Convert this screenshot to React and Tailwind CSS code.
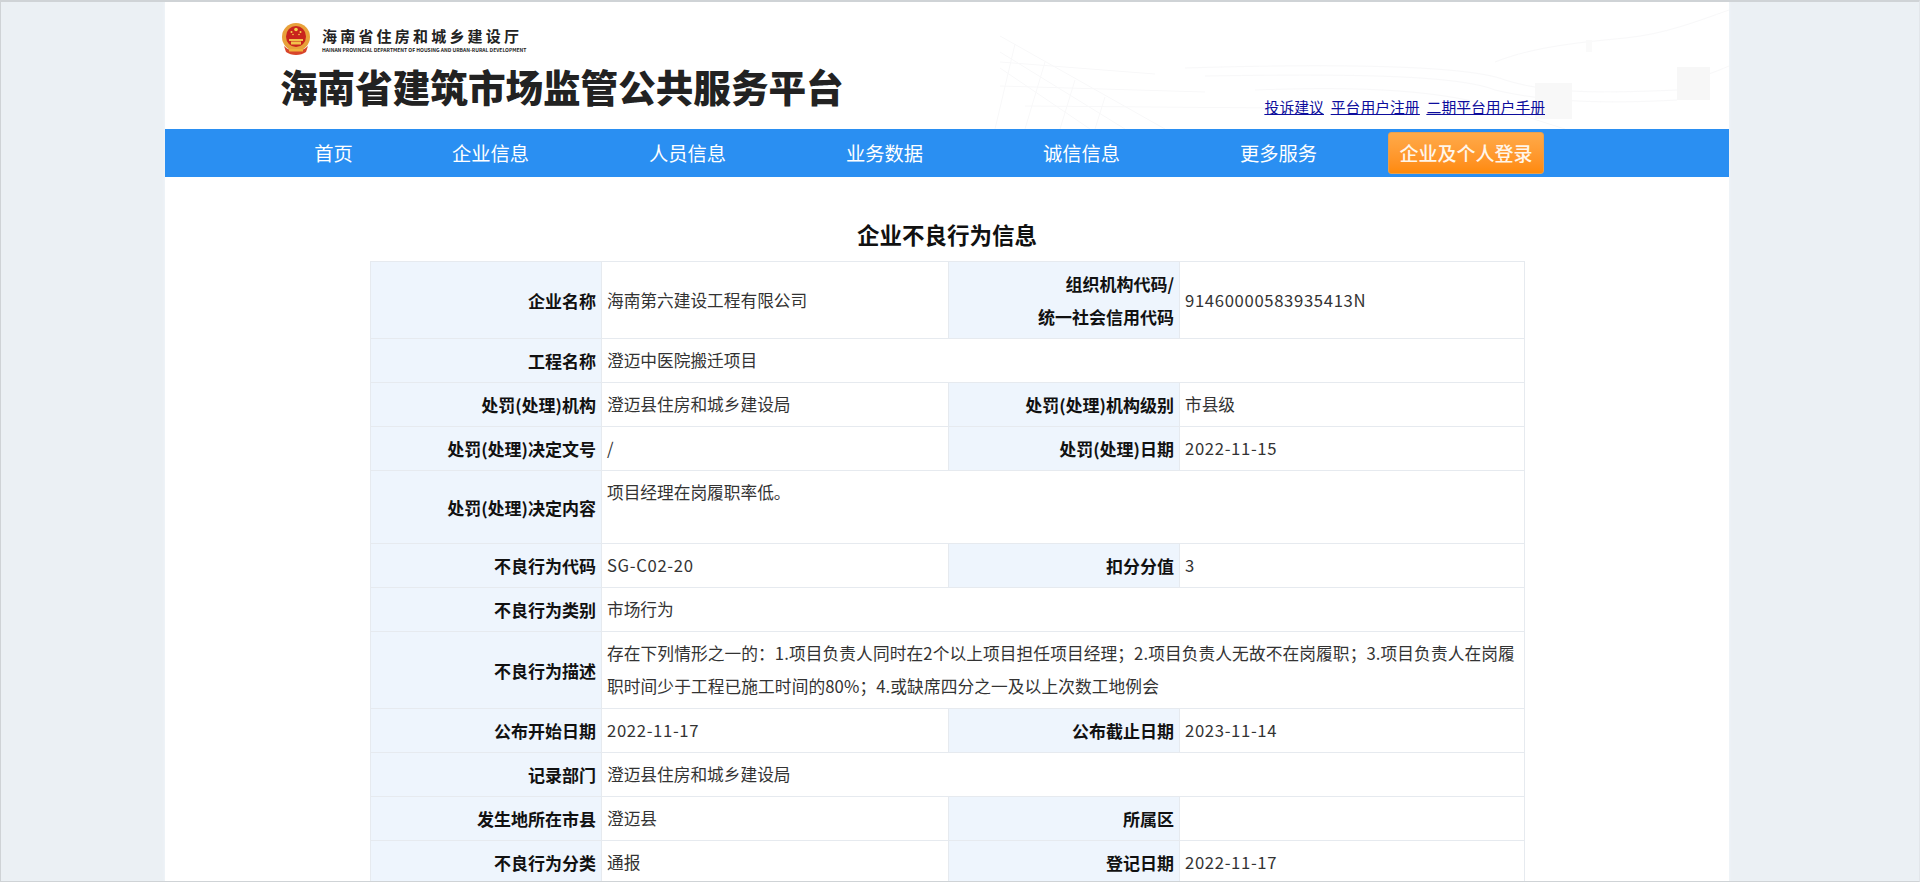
import React from 'react';

const navItems = ['企业信息', '人员信息', '业务数据', '诚信信息', '更多服务'];

const Label = ({ children }) => (
    <th className='border border-[#e6eaef] bg-[#eef5fd] px-[5px] py-[5px] text-right align-middle text-[17px] font-bold text-[#111]'>{children}</th>
);

const Value = ({ children, span, top, num }) => (
    <td colSpan={span} className={`border border-[#e6eaef] px-[5px] py-[5px] text-left text-[#333] ${top ? 'align-top' : 'align-middle'} ${num ? 'tracking-[0.65px]' : ''}`}>{children}</td>
);

const Row = ({ a, b, c, d, numB, numD }) => (
    <tr>
        <Label>{a}</Label>
        <Value num={numB}>{b}</Value>
        <Label>{c}</Label>
        <Value num={numD}>{d}</Value>
    </tr>
);

const WideRow = ({ a, b }) => (
    <tr>
        <Label>{a}</Label>
        <Value span={3}>{b}</Value>
    </tr>
);

const Emblem = () => (
    <svg width='30' height='32' viewBox='0 0 30 32'>
        <ellipse cx='15' cy='14' rx='14' ry='14' fill='#e8a13a' />
        <ellipse cx='15' cy='13.5' rx='10' ry='10.5' fill='#c9241d' />
        <circle cx='15' cy='6.5' r='1.8' fill='#f6d44c' />
        <circle cx='10.5' cy='9' r='1' fill='#f6d44c' />
        <circle cx='12' cy='11.5' r='0.8' fill='#f6d44c' />
        <circle cx='18' cy='11.5' r='0.8' fill='#f6d44c' />
        <circle cx='19.5' cy='9' r='1' fill='#f6d44c' />
        <path d='M8 16h14v2H8zM10 18.5h10v3H10z' fill='#f2c14a' />
        <path d='M3 23c4 4 8 5 12 5s8-1 12-5l-2 6c-3 2-6 3-10 3s-7-1-10-3z' fill='#d8452a' />
        <path d='M8 26h14v2.5H8z' fill='#f0b23c' />
    </svg>
);

// faint lines behind the header
const HeaderPattern = () => (
    <svg className='absolute inset-0' width='1564' height='127' viewBox='0 0 1564 127' fill='none'>
        <g stroke='#f8f8f9' strokeWidth='1'>
            <path d='M835 34 L1000 127 M835 50 L960 127 M835 66 L925 127 M850 42 L830 127 M880 60 L860 127 M910 78 L895 127 M940 95 L930 127' />
            <path d='M835 60 L990 72 M835 84 L1040 90 M860 104 L1110 106' />
            <path d='M1020 66 C1150 62 1300 62 1340 78 C1380 90 1420 92 1512 88' />
            <path d='M1040 74 C1170 72 1290 72 1330 88 C1380 100 1440 102 1512 98' />
            <path d='M1090 88 C1200 84 1280 88 1340 108 L1400 127' />
            <path d='M1330 60 C1370 44 1420 40 1460 36 C1500 32 1530 20 1564 8' />
            <path d='M1512 80 C1530 78 1550 70 1564 64' />
        </g>
        <rect x='1370' y='81' width='37' height='36' fill='#f8f8f8' />
        <rect x='1512' y='65' width='33' height='33' fill='#f7f7f7' />
        <rect x='1421' y='38' width='6' height='12' fill='#fafafa' />
    </svg>
);

const App = () => {
    return (
        <div className='h-[882px] overflow-hidden border-t-2 border-r border-b border-l border-t-[#cfd3d6] border-r-[#e2e6ea] border-b-[#cfd3d6] border-l-[#cfd3d6] bg-[#ebf0f4] font-["Noto_Sans_CJK_SC",sans-serif]'>
            <div className='ml-[164px] h-full w-[1564px] bg-white shadow-[0_0_3px_#f4f8fc]'>
                <header className='relative flex h-[127px] overflow-hidden'>
                    <HeaderPattern />
                    <div className='relative ml-[115px] flex flex-col'>
                        <div className='mt-[21px] ml-[1px] flex h-[32px] items-center gap-[11px]'>
                            <Emblem />
                            <div className='flex flex-col'>
                                <span className='text-[15px] leading-[20px] font-bold tracking-[3.2px] text-[#222]'>海南省住房和城乡建设厅</span>
                                <span className='whitespace-nowrap text-[5px] leading-[7px] font-bold text-[#222]'>HAINAN PROVINCIAL DEPARTMENT OF HOUSING AND URBAN-RURAL DEVELOPMENT</span>
                            </div>
                        </div>
                        <h1 className='mt-[8px] text-[37.6px] leading-[46px] font-black whitespace-nowrap text-[#222]'>海南省建筑市场监管公共服务平台</h1>
                    </div>
                    <div className='relative mr-[184px] mb-[12px] ml-auto flex items-end gap-[7px] text-[14.8px] leading-[20px] text-[#0d0d9c] underline'>
                        <a href='#'>投诉建议</a>
                        <a href='#'>平台用户注册</a>
                        <a href='#'>二期平台用户手册</a>
                    </div>
                </header>

                <nav className='flex h-[48px] items-center bg-[#2a8ff2] pl-[110px] text-[19.3px] text-white'>
                    <a href='#' className='w-[117px] text-center'>首页</a>
                    {navItems.map((item) => (
                        <a key={item} href='#' className='w-[197px] text-center'>{item}</a>
                    ))}
                    <a href='#' className='ml-[11px] flex h-[42px] w-[156px] items-center justify-center rounded-[3px] border border-[#e9a04e] bg-gradient-to-b from-[#ffaa48] to-[#ff8a08] text-[19px] font-medium text-[#fff6ea]'>企业及个人登录</a>
                </nav>

                <main className='pt-[37px]'>
                    <h2 className='mb-[7px] text-center text-[22.5px] leading-[40px] font-bold text-[#111]'>企业不良行为信息</h2>
                    <table className='ml-[205px] w-[1154px] table-fixed border-collapse text-[16.7px] leading-[33px]'>
                        <colgroup>
                            <col className='w-[231px]' />
                            <col className='w-[347px]' />
                            <col className='w-[231px]' />
                            <col className='w-[345px]' />
                        </colgroup>
                        <tbody>
                            <Row a='企业名称' b='海南第六建设工程有限公司' c={<>组织机构代码/<br />统一社会信用代码</>} d='91460000583935413N' numD />
                            <WideRow a='工程名称' b='澄迈中医院搬迁项目' />
                            <Row a='处罚(处理)机构' b='澄迈县住房和城乡建设局' c='处罚(处理)机构级别' d='市县级' />
                            <Row a='处罚(处理)决定文号' b='/' c='处罚(处理)日期' d='2022-11-15' numD />
                            <tr className='h-[73px]'>
                                <Label>处罚(处理)决定内容</Label>
                                <Value span={3} top>项目经理在岗履职率低。</Value>
                            </tr>
                            <Row a='不良行为代码' b='SG-C02-20' numB c='扣分分值' d='3' />
                            <WideRow a='不良行为类别' b='市场行为' />
                            <WideRow a='不良行为描述' b={<span className='tracking-[0.1px]'>存在下列情形之一的：1.项目负责人同时在2个以上项目担任项目经理；2.项目负责人无故不在岗履职；3.项目负责人在岗履<br />职时间少于工程已施工时间的80%；4.或缺席四分之一及以上次数工地例会</span>} />
                            <Row a='公布开始日期' b='2022-11-17' numB c='公布截止日期' d='2023-11-14' numD />
                            <WideRow a='记录部门' b='澄迈县住房和城乡建设局' />
                            <Row a='发生地所在市县' b='澄迈县' c='所属区' d='' />
                            <Row a='不良行为分类' b='通报' c='登记日期' d='2022-11-17' numD />
                        </tbody>
                    </table>
                </main>
            </div>
        </div>
    );
};

export default App;
